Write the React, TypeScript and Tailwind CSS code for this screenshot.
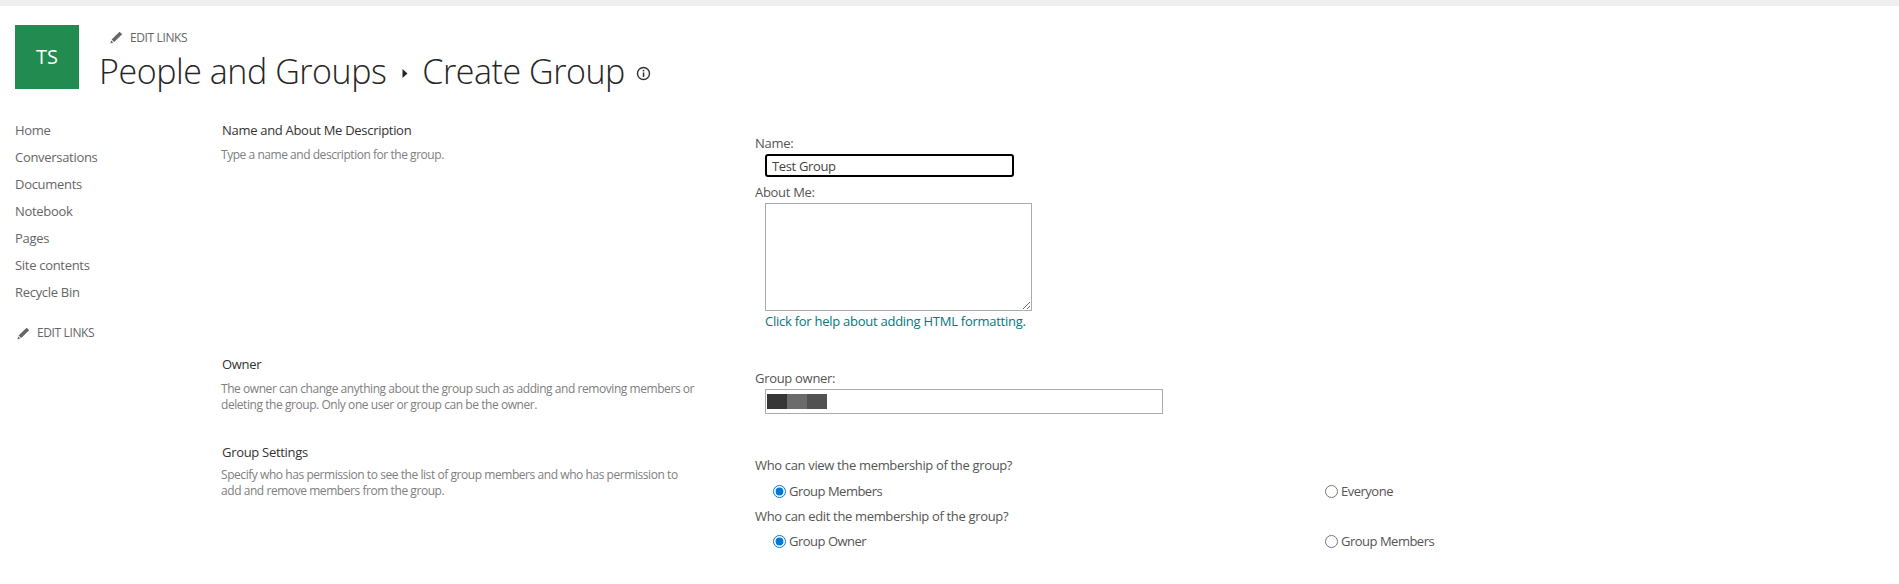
const font = { fontFamily: '"Open Sans", "Noto Sans", sans-serif' };

function Pencil() {
  return (
    <svg width="13" height="13" viewBox="0 0 13 13" className="shrink-0" aria-hidden="true">
      <path d="M9.6 0.8 12.2 3.2 4.2 11 1.6 8.6Z" fill="#666666" />
      <path d="M1.2 9.4 3.4 11.5 0.4 12.6Z" fill="#666666" />
    </svg>
  );
}

function EditLinks() {
  return (
    <div className="flex items-center gap-[7px] text-[12px] tracking-[-0.38px] text-[#666666]">
      <Pencil />
      <span>EDIT LINKS</span>
    </div>
  );
}

function Radio({ label, checked, name }: { label: string; checked?: boolean; name: string }) {
  return (
    <label className="flex items-center gap-[3px] text-[13px] tracking-[-0.5px] text-[#555555]">
      <input type="radio" name={name} defaultChecked={checked} className="m-0 h-[13px] w-[13px] accent-[#0078d7]" />
      <span>{label}</span>
    </label>
  );
}

function Section({
  title,
  lines,
  className,
  descClass,
}: {
  title: string;
  lines: string[];
  className: string;
  descClass: string;
}) {
  return (
    <div className={className}>
      <div className="text-[13px] leading-[18px] tracking-[-0.3px] text-[#333333]">{title}</div>
      <div className={descClass}>
        {lines.map((l) => (
          <div key={l}>{l}</div>
        ))}
      </div>
    </div>
  );
}

export default function App() {
  const nav = ["Home", "Conversations", "Documents", "Notebook", "Pages", "Site contents", "Recycle Bin"];
  return (
    <div style={font} className="h-[584px] w-[1899px] overflow-hidden bg-white">
      <div className="h-[6px] bg-[#efefef]" />
      <header className="flex pl-[15px] pt-[19px]">
        <div className="flex h-[64px] w-[64px] items-center justify-center bg-[#228b50] text-[20px] text-white">TS</div>
        <div className="ml-[20px]">
          <div className="pl-[11px] pt-[4px] leading-[17px]">
            <EditLinks />
          </div>
          <div className="flex h-[50px] items-center text-[34px] font-light tracking-[-0.45px] text-[#262626]">
            <span>People and Groups</span>
            <svg width="6" height="9" viewBox="0 0 6 9" className="ml-[16px] mr-[14px] mt-[5px]" aria-hidden="true">
              <path d="M0.5 0 5.5 4.5 0.5 9Z" fill="#262626" />
            </svg>
            <span>Create Group</span>
            <svg width="15" height="15" viewBox="0 0 15 15" className="ml-[11px] mt-[5px]" aria-hidden="true">
              <circle cx="7.5" cy="7.5" r="6" fill="none" stroke="#333333" strokeWidth="1.4" />
              <rect x="6.8" y="6.4" width="1.5" height="4.6" fill="#333333" />
              <rect x="6.8" y="3.8" width="1.5" height="1.6" fill="#333333" />
            </svg>
          </div>
        </div>
      </header>

      <main className="mt-[16px] flex">
        <nav className="w-[221px] shrink-0 pl-[15px] pt-[5px]">
          {nav.map((n) => (
            <div key={n} className="h-[27px] text-[13px] leading-[27px] tracking-[-0.3px] text-[#666666]">
              {n}
            </div>
          ))}
          <div className="ml-[2px] mt-[18px]">
            <EditLinks />
          </div>
        </nav>

        <div className="grid flex-1 grid-cols-[534px_1fr] pt-[5px]">
          <Section
            title="Name and About Me Description"
            lines={["Type a name and description for the group."]}
            className="h-[238px] pl-[1px] pt-[4px]"
            descClass="mt-[7px] -ml-[1px] text-[12px] leading-[17px] tracking-[-0.46px] text-[#808080]"
          />
          <div className="h-[238px] pt-[17px] text-[13px] tracking-[-0.3px] text-[#555555]">
            <div className="leading-[18px]">Name:</div>
            <input
              defaultValue="Test Group"
              className="ml-[10px] mt-[2px] block h-[23px] w-[249px] rounded-[3px] border-2 border-black px-[5px] text-[13px] tracking-[-0.35px] text-[#444444] outline-none"
            />
            <div className="mt-[6px] leading-[18px]">About Me:</div>
            <textarea className="ml-[10px] mt-[2px] block h-[108px] w-[267px] border border-[#ababab] outline-none" />
            <div className="ml-[10px] mt-[1px] leading-[18px] tracking-[-0.26px] text-[#03787c]">
              Click for help about adding HTML formatting.
            </div>
          </div>

          <Section
            title="Owner"
            lines={[
              "The owner can change anything about the group such as adding and removing members or",
              "deleting the group. Only one user or group can be the owner.",
            ]}
            className="h-[88px] pl-[1px]"
            descClass="mt-[8px] -ml-[1px] text-[12px] leading-[16px] tracking-[-0.44px] text-[#808080]"
          />
          <div className="h-[88px] text-[13px] tracking-[-0.3px] text-[#555555]">
            <div className="pt-[14px] leading-[18px]">Group owner:</div>
            <div className="ml-[10px] mt-[2px] flex h-[25px] w-[398px] items-center border border-[#ababab] pl-[1px]">
              <div className="h-[15px] w-[20px] bg-[#363636]" />
              <div className="h-[15px] w-[20px] bg-[#6b6b6b]" />
              <div className="h-[15px] w-[20px] bg-[#525252]" />
            </div>
          </div>

          <Section
            title="Group Settings"
            lines={[
              "Specify who has permission to see the list of group members and who has permission to",
              "add and remove members from the group.",
            ]}
            className="pl-[1px]"
            descClass="mt-[6px] -ml-[1px] text-[12px] leading-[16px] tracking-[-0.44px] text-[#808080]"
          />
          <div className="pt-[13px] text-[13px] tracking-[-0.34px] text-[#555555]">
            <div className="leading-[18px]">Who can view the membership of the group?</div>
            <div className="mt-[8px] grid h-[16px] grid-cols-[552px_1fr] pl-[18px]">
              <Radio name="view" label="Group Members" checked />
              <Radio name="view" label="Everyone" />
            </div>
            <div className="mt-[9px] leading-[18px]">Who can edit the membership of the group?</div>
            <div className="mt-[7px] grid h-[16px] grid-cols-[552px_1fr] pl-[18px]">
              <Radio name="edit" label="Group Owner" checked />
              <Radio name="edit" label="Group Members" />
            </div>
          </div>
        </div>
      </main>
    </div>
  );
}
